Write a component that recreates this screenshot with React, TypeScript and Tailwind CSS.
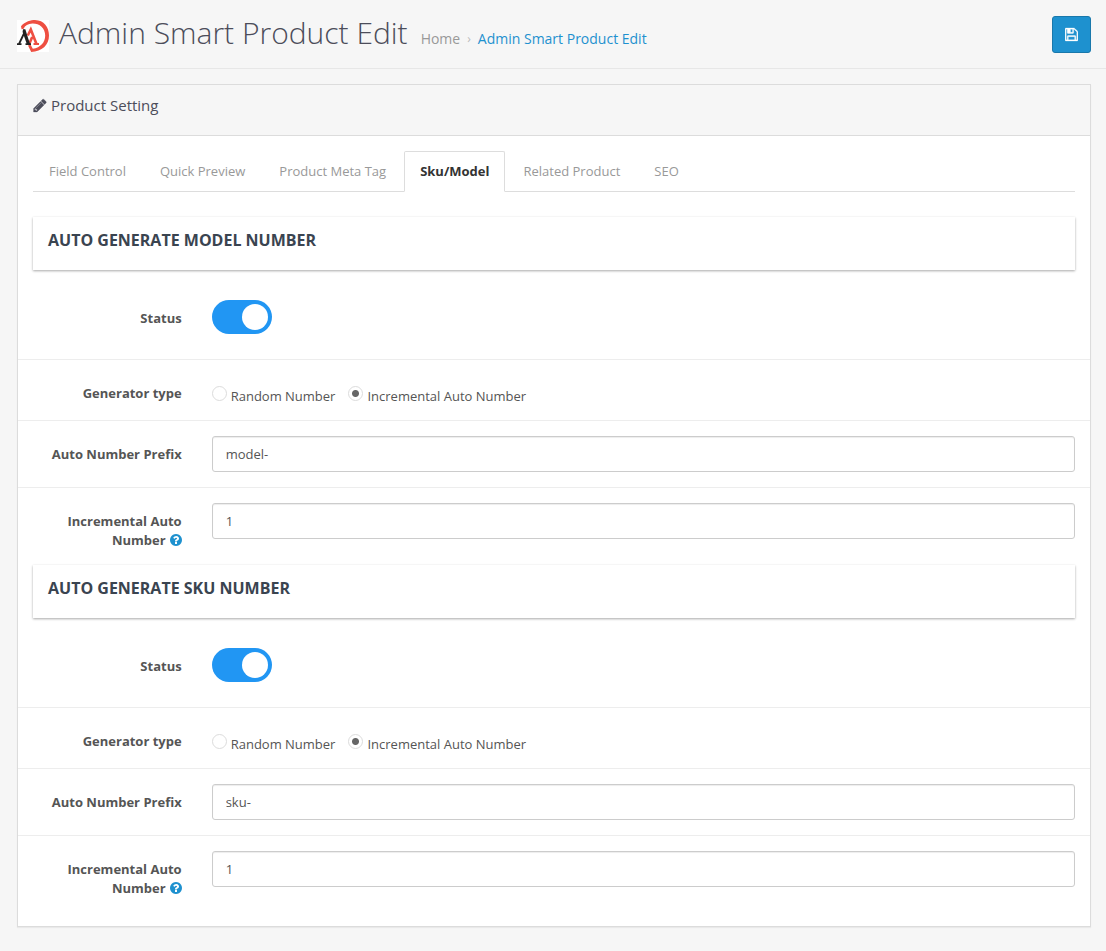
import React, { useState } from 'react';

const FloppyIcon = ({ className }: { className?: string }) => (
    <svg
        viewBox="0 0 1536 1792"
        fill="currentColor"
        stroke="currentColor"
        strokeWidth="40"
        className={className}
        aria-hidden="true"
    >
        <path d="M384 1536h768v-384h-768v384zm896 0h128v-896q0-14-10-38.5t-20-34.5l-281-281q-10-10-34-20t-39-10v416q0 40-28 68t-68 28h-576q-40 0-68-28t-28-68v-416h-128v1280h128v-416q0-40 28-68t68-28h832q40 0 68 28t28 68v416zm-384-928v-320q0-13-9.5-22.5t-22.5-9.5h-192q-13 0-22.5 9.5t-9.5 22.5v320q0 13 9.5 22.5t22.5 9.5h192q13 0 22.5-9.5t9.5-22.5zm640 32v928q0 40-28 68t-68 28h-1344q-40 0-68-28t-28-68v-1344q0-40 28-68t68-28h928q40 0 88 20t76 48l280 280q28 28 48 76t20 88z" />
    </svg>
);

const PencilIcon = ({ className }: { className?: string }) => (
    <svg
        viewBox="128 0 1536 1792"
        fill="currentColor"
        stroke="currentColor"
        strokeWidth="40"
        className={className}
        aria-hidden="true"
    >
        <path d="M491 1536l91-91-235-235-91 91v107h128v128h107zm523-928q0-22-22-22-10 0-17 7l-542 542q-7 7-7 17 0 22 22 22 10 0 17-7l542-542q7-7 7-17zm-54-192l416 416-832 832h-416v-416zm683 96q0 53-37 90l-166 166-416-416 166-165q36-38 90-38 53 0 91 38l235 234q37 39 37 91z" />
    </svg>
);

const HelpIcon = ({ className }: { className?: string }) => (
    <svg
        viewBox="128 128 1536 1536"
        fill="currentColor"
        className={className}
        aria-hidden="true"
    >
        <path d="M1024 1376v-192q0-14-9-23t-23-9h-192q-14 0-23 9t-9 23v192q0 14 9 23t23 9h192q14 0 23-9t9-23zm256-672q0-88-55.5-163t-138.5-116-170-41q-243 0-371 213-15 24 8 42l132 100q7 6 19 6 16 0 25-12 53-68 86-92 34-24 86-24 48 0 85.5 26t37.5 59q0 38-20 61t-68 45q-63 28-115.5 86.5t-52.5 125.5v36q0 14 9 23t23 9h192q14 0 23-9t9-23q0-19 21.5-49.5t54.5-49.5q32-18 49-28.5t46-35 44.5-48 28-60.5 12.5-81zm384 192q0 209-103 385.5t-279.5 279.5-385.5 103-385.5-103-279.5-279.5-103-385.5 103-385.5 279.5-279.5 385.5-103 385.5 103 279.5 279.5 103 385.5z" />
    </svg>
);

const Logo = () => (
    <svg viewBox="0 0 32 32" className="mt-1 size-8 bg-white" aria-hidden="true">
        <path
            d="M4 6.2C8 1.500 14 0 18 0C27 .3 32 7 32 15.500C32 25 25 31.500 14.200 32L11 25.500L13.500 24.500L15.800 28.800C23.500 27.500 28.200 22.500 28.200 15.500C28.200 8 22.500 3.300 15.500 3.400C11 3.500 8 5.200 6.600 8.800L4.600 9.200Z"
            fill="#ee4f42"
        />
        <path
            d="M10.800 15.500L13.800 9.500L19.300 23.500M12 24.500L15.200 17"
            fill="none"
            stroke="#ee4f42"
            strokeWidth="2.600"
        />
        <path d="M16.500 23h5.500v2h-5.500z" fill="#ee4f42" />
        <path
            d="M2 24L7.200 13"
            fill="none"
            stroke="#222"
            strokeWidth="1.800"
        />
        <path d="M6 9.200H8.300L13 24H9.800L5.600 12Z" fill="#222" />
        <path d="M0 23.200h4.500v1.800h-4.500zM8.500 23.200h5.500v1.800h-5.500z" fill="#222" />
    </svg>
);

const tabs = [
    'Field Control',
    'Quick Preview',
    'Product Meta Tag',
    'Sku/Model',
    'Related Product',
    'SEO',
];

const Row = ({
    label,
    htmlFor,
    help,
    className = 'py-[15px]',
    children,
}: {
    label: string;
    htmlFor?: string;
    help?: boolean;
    className?: string;
    children: React.ReactNode;
}) => {
    return (
        <div className={`flex items-start ${className}`}>
            <label
                htmlFor={htmlFor}
                className="w-1/6 shrink-0 px-[15px] pt-[9px] text-right font-bold"
            >
                {label}
                {help && (
                    <HelpIcon className="ml-1 inline-block size-3 align-[-1px] text-[#1e91cf]" />
                )}
            </label>
            <div className="min-w-0 flex-1 px-[15px]">{children}</div>
        </div>
    );
};

const Radio = ({
    name,
    label,
    checked,
    onChange,
}: {
    name: string;
    label: string;
    checked: boolean;
    onChange: () => void;
}) => {
    return (
        <label className="flex items-start">
            <input
                type="radio"
                name={name}
                checked={checked}
                onChange={onChange}
                className="mr-1 size-[15px] appearance-none rounded-full border border-[#dcdcdc] bg-white checked:bg-[radial-gradient(circle,#666_3px,transparent_4px)]"
            />
            <span className="pt-px">{label}</span>
        </label>
    );
};

const GeneratorSection = ({
    id,
    title,
    defaultPrefix,
}: {
    id: string;
    title: string;
    defaultPrefix: string;
}) => {
    const [enabled, setEnabled] = useState(true);
    const [type, setType] = useState('incremental');
    const [prefix, setPrefix] = useState(defaultPrefix);
    const [start, setStart] = useState('1');

    const inputClass =
        'block h-9 w-full rounded-[3px] border border-[#ccc] bg-white px-[13px] text-[13px] text-[#555] shadow-[inset_0_1px_1px_rgba(0,0,0,0.075)] outline-none focus:border-[#66afe9]';

    return (
        <section>
            <h2 className="mx-[15px] h-[53px] px-[15px] pt-3 text-base leading-[22px] font-bold text-[#3a4450] shadow-[0_1px_3px_rgba(0,0,0,0.12),0_1px_2px_rgba(0,0,0,0.24)]">
                {title}
            </h2>
            <div className="divide-y divide-[#ededed]">
                <Row
                    label="Status"
                    htmlFor={`${id}-status`}
                    className="pt-[30px] pb-[25px]"
                >
                    <input
                        id={`${id}-status`}
                        type="checkbox"
                        role="switch"
                        checked={enabled}
                        onChange={(e) => setEnabled(e.target.checked)}
                        className="block h-[34px] w-[60px] cursor-pointer appearance-none rounded-full bg-[#ccc] p-1 before:block before:size-[26px] before:rounded-full before:bg-white checked:bg-[#2196f3] checked:before:ml-[26px]"
                    />
                </Row>
                <Row label="Generator type" className="pt-[15px] pb-[14px]">
                    <div
                        role="radiogroup"
                        aria-label="Generator type"
                        className="flex gap-[13px] pt-[11px]"
                    >
                        <Radio
                            name={`${id}-type`}
                            label="Random Number"
                            checked={type === 'random'}
                            onChange={() => setType('random')}
                        />
                        <Radio
                            name={`${id}-type`}
                            label="Incremental Auto Number"
                            checked={type === 'incremental'}
                            onChange={() => setType('incremental')}
                        />
                    </div>
                </Row>
                <Row label="Auto Number Prefix" htmlFor={`${id}-prefix`}>
                    <input
                        id={`${id}-prefix`}
                        type="text"
                        value={prefix}
                        onChange={(e) => setPrefix(e.target.value)}
                        className={inputClass}
                    />
                </Row>
                <Row
                    label="Incremental Auto Number"
                    htmlFor={`${id}-start`}
                    help
                >
                    <input
                        id={`${id}-start`}
                        type="text"
                        value={start}
                        onChange={(e) => setStart(e.target.value)}
                        className={inputClass}
                    />
                </Row>
            </div>
        </section>
    );
};

export default function App() {
    const [activeTab, setActiveTab] = useState('Sku/Model');

    return (
        <div className="min-h-screen bg-[#f6f6f6] pb-[23px] font-['Open_Sans',sans-serif] text-[13px] leading-[19px] text-[#555]">
            <header className="flex items-start justify-between border-b border-[#e7e7e7] pt-4 pr-[15px] pb-[15px] pl-[17px]">
                <div className="flex items-start">
                    <Logo />
                    <h1 className="ml-[10px] text-[30px] leading-[34px] font-light text-[#4c4d5a]">
                        Admin Smart Product Edit
                    </h1>
                    <nav className="ml-[13px] flex items-center pt-[13px] text-sm">
                        <a href="#home" className="text-[#999]">
                            Home
                        </a>
                        <span className="px-[7px] text-xs text-[#bbb]">›</span>
                        <a href="#edit" className="text-[#1e91cf]">
                            Admin Smart Product Edit
                        </a>
                    </nav>
                </div>
                <button
                    type="button"
                    aria-label="Save"
                    className="flex h-[37px] w-[39px] items-center justify-center rounded-[3px] border border-[#1978ab] bg-[#1e91cf] text-white"
                >
                    <FloppyIcon className="h-[15px] w-[13px]" />
                </button>
            </header>
            <main className="pt-[15px] pr-[15px] pl-[17px]">
                <div className="border border-[#dcdcdc] bg-white shadow-[0_1px_1px_rgba(0,0,0,0.05)]">
                    <div className="flex items-start border-b border-[#dcdcdc] bg-[#f6f6f6] px-[15px] pt-[10px] pb-5">
                        <PencilIcon className="mt-[3px] mr-1 h-[15px] w-[14px] text-[#4c4d5a]" />
                        <h3 className="text-[15px] leading-5 text-[#4c4d5a]">
                            Product Setting
                        </h3>
                    </div>
                    <div className="pt-[15px] pb-[13px]">
                        <div
                            role="tablist"
                            className="mx-[15px] mb-[25px] flex gap-[2px] border-b border-[#ddd]"
                        >
                            {tabs.map((tab) => (
                                <button
                                    key={tab}
                                    type="button"
                                    role="tab"
                                    aria-selected={tab === activeTab}
                                    onClick={() => setActiveTab(tab)}
                                    className={`-mb-px rounded-t-[2px] border px-[15px] py-[10px] ${
                                        tab === activeTab
                                            ? 'border-[#ddd] border-b-white bg-white font-bold text-[#333]'
                                            : 'border-transparent text-[#999]'
                                    }`}
                                >
                                    {tab}
                                </button>
                            ))}
                        </div>
                        <GeneratorSection
                            id="model"
                            title="AUTO GENERATE MODEL NUMBER"
                            defaultPrefix="model-"
                        />
                        <GeneratorSection
                            id="sku"
                            title="AUTO GENERATE SKU NUMBER"
                            defaultPrefix="sku-"
                        />
                    </div>
                </div>
            </main>
        </div>
    );
}
